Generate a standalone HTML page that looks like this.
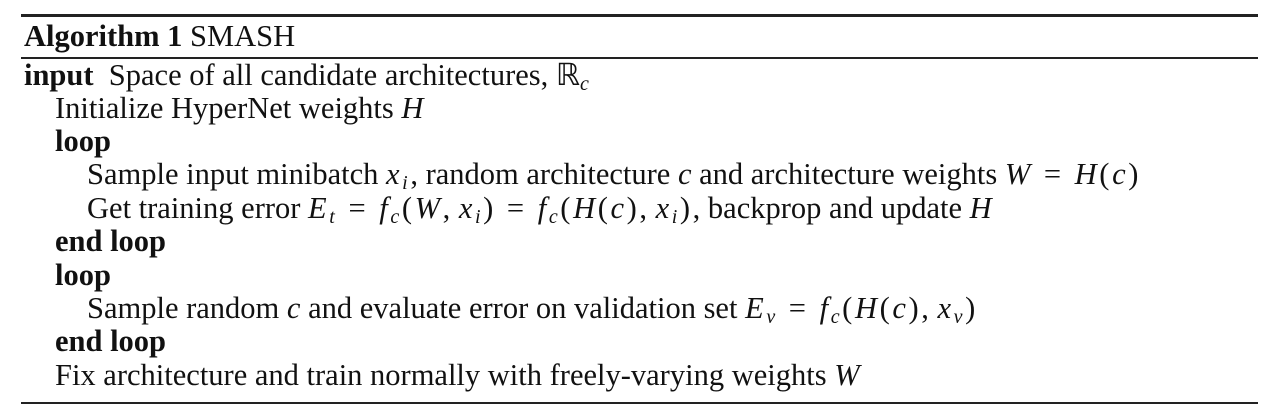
<!DOCTYPE html><html><head><style>
body{margin:0;width:1274px;height:420px;background:#fff;position:relative;overflow:hidden;font-family:"Liberation Serif",serif;font-size:30.5px;color:#111}
.l{position:absolute;white-space:nowrap;line-height:1}
.r{position:absolute;left:21px;width:1237px;background:#222}
i{font-style:italic}
b{font-weight:bold}
sub{font-size:20px;vertical-align:-5px;line-height:0}
.m{letter-spacing:2.6px}
.e{margin:0 11px}
.c{margin-right:6px}
</style></head><body>
<div class="r" style="top:14px;height:3px"></div>
<div class="r" style="top:57px;height:1.5px"></div>
<div class="r" style="top:402px;height:1.5px"></div>
<div class="l" style="left:24px;top:21px"><b>Algorithm 1</b> SMASH</div>
<div class="l" style="left:24px;top:60px"><b>input</b>&nbsp; Space of all candidate architectures, ℝ<sub><i>c</i></sub></div>
<div class="l" style="left:55px;top:93px">Initialize HyperNet weights <i>H</i></div>
<div class="l" style="left:55px;top:126px"><b>loop</b></div>
<div class="l" style="left:87px;top:159px">Sample input minibatch <span class="m"><i>x<sub>i</sub></i></span>, random architecture <i>c</i> and architecture weights <span class="m"><i>W</i><span class="e">=</span><i>H</i>(<i>c</i>)</span></div>
<div class="l" style="left:87px;top:193px">Get training error <span class="m"><i>E<sub>t</sub></i><span class="e">=</span><i>f<sub>c</sub></i>(<i>W</i>,<span class="c"></span><i>x<sub>i</sub></i>)<span class="e">=</span><i>f<sub>c</sub></i>(<i>H</i>(<i>c</i>),<span class="c"></span><i>x<sub>i</sub></i>)</span>, backprop and update <i>H</i></div>
<div class="l" style="left:55px;top:226px"><b>end loop</b></div>
<div class="l" style="left:55px;top:260px"><b>loop</b></div>
<div class="l" style="left:87px;top:293px">Sample random <i>c</i> and evaluate error on validation set <span class="m"><i>E<sub>v</sub></i><span class="e">=</span><i>f<sub>c</sub></i>(<i>H</i>(<i>c</i>),<span class="c"></span><i>x<sub>v</sub></i>)</span></div>
<div class="l" style="left:55px;top:326px"><b>end loop</b></div>
<div class="l" style="left:55px;top:360px">Fix architecture and train normally with freely-varying weights <i>W</i></div>
</body></html>
